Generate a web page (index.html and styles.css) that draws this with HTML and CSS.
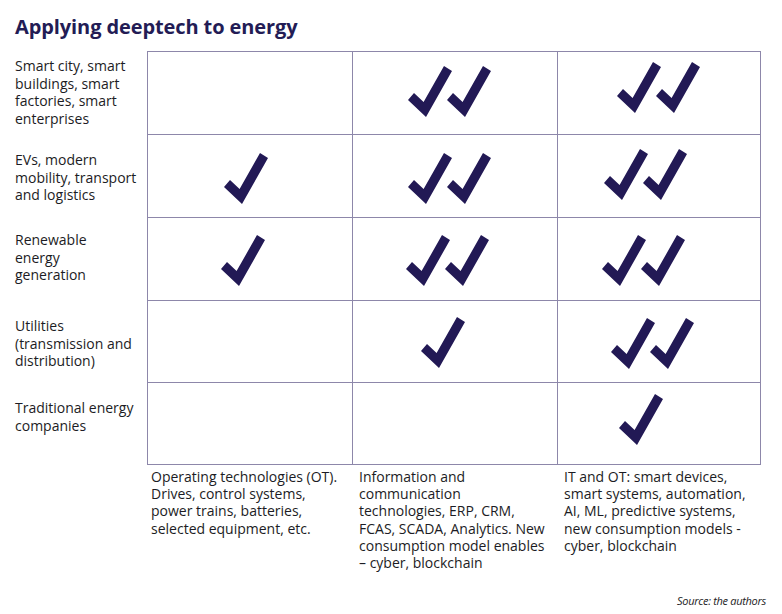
FILE: index.html
```html
<!DOCTYPE html>
<html lang="en">
<head>
<meta charset="utf-8">
<title>Applying deeptech to energy</title>
<link rel="stylesheet" href="styles.css">
</head>
<body>
<svg width="0" height="0" class="defs" aria-hidden="true">
  <defs>
    <symbol id="tick" viewBox="0 0 44 51">
      <polygon points="0,34 6,27 15.6,36.1 36,0 44,5 18,51"/>
    </symbol>
  </defs>
</svg>
<main class="page">
  <h1 class="title">Applying deeptech to energy</h1>
  <div class="matrix">
    <div class="label label-first">Smart city, smart<br>buildings, smart<br>factories, smart<br>enterprises</div>
    <div class="cell"></div>
    <div class="cell"><span class="checks r1c2"><svg class="tick"><use href="#tick"/></svg><svg class="tick"><use href="#tick"/></svg></span></div>
    <div class="cell cell-last"><span class="checks r1c3"><svg class="tick"><use href="#tick"/></svg><svg class="tick"><use href="#tick"/></svg></span></div>

    <div class="label">EVs, modern<br>mobility, transport<br>and logistics</div>
    <div class="cell"><span class="checks r2c1"><svg class="tick"><use href="#tick"/></svg></span></div>
    <div class="cell"><span class="checks r2c2"><svg class="tick"><use href="#tick"/></svg><svg class="tick"><use href="#tick"/></svg></span></div>
    <div class="cell cell-last"><span class="checks r2c3"><svg class="tick"><use href="#tick"/></svg><svg class="tick"><use href="#tick"/></svg></span></div>

    <div class="label label-renew">Renewable<br>energy<br>generation</div>
    <div class="cell"><span class="checks r3c1"><svg class="tick"><use href="#tick"/></svg></span></div>
    <div class="cell"><span class="checks r3c2"><svg class="tick"><use href="#tick"/></svg><svg class="tick"><use href="#tick"/></svg></span></div>
    <div class="cell cell-last"><span class="checks r3c3"><svg class="tick"><use href="#tick"/></svg><svg class="tick"><use href="#tick"/></svg></span></div>

    <div class="label">Utilities<br>(transmission and<br>distribution)</div>
    <div class="cell"></div>
    <div class="cell"><span class="checks r4c2"><svg class="tick"><use href="#tick"/></svg></span></div>
    <div class="cell cell-last"><span class="checks r4c3"><svg class="tick"><use href="#tick"/></svg><svg class="tick"><use href="#tick"/></svg></span></div>

    <div class="label">Traditional energy<br>companies</div>
    <div class="cell cell-bottom"></div>
    <div class="cell cell-bottom"></div>
    <div class="cell cell-bottom cell-last"><span class="checks r5c3"><svg class="tick"><use href="#tick"/></svg></span></div>

    <div class="spacer"></div>
    <div class="desc desc-first">Operating technologies (OT).<br>Drives, control systems,<br>power trains, batteries,<br>selected equipment, etc.</div>
    <div class="desc">Information and<br>communication<br>technologies, ERP, CRM,<br>FCAS, SCADA, Analytics. New<br>consumption model enables<br>– cyber, blockchain</div>
    <div class="desc">IT and OT: smart devices,<br>smart systems, automation,<br>AI, ML, predictive systems,<br>new consumption models -<br>cyber, blockchain</div>
  </div>
  <p class="source">Source: the authors</p>
</main>
</body>
</html>
```

FILE: styles.css
```css
* { box-sizing: border-box; }
html, body { margin: 0; padding: 0; background: #ffffff; }
body {
  font-family: "Open Sans", "Liberation Sans", sans-serif;
  color: #1c1c24;
  width: 782px;
  height: 614px;
  overflow: hidden;
  position: relative;
}
.defs { position: absolute; width: 0; height: 0; }
.page { padding: 13px 0 0 15px; }
.title {
  margin: 0 0 10px 0;
  font-size: 20px;
  line-height: 28px;
  font-weight: 700;
  color: #231c55;
  letter-spacing: -0.1px;
}
.matrix {
  display: grid;
  grid-template-columns: 132px 205px 205px 204px;
  grid-template-rows: 83px 83px 83px 82px 83px auto;
}
.label {
  font-size: 14px;
  line-height: 17.5px;
  padding: 17px 4px 0 0;
  white-space: nowrap;
}
.label-first { padding-top: 6px; }
.label-renew { padding-top: 14px; }
.cell {
  border-left: 1px solid #8d87aa;
  border-top: 1px solid #8d87aa;
  display: flex;
  align-items: center;
  justify-content: center;
}
.cell-last { border-right: 1px solid #8d87aa; }
.cell-bottom { border-bottom: 1px solid #8d87aa; }
.checks { display: flex; fill: #221955; }
.tick { width: 44px; height: 51px; display: block; }
.tick + .tick { margin-left: -5px; }

/* hand-placed offsets of each mark within its cell */
.r1c2 { transform: translate(-6px, -2px); }
.r1c3 { transform: translate(-1px, -6px); }
.r2c1 { transform: translate(-4px, 2px); }
.r2c2 { transform: translate(-6px, 2px); }
.r2c3 { transform: translate(-14px, -2px); }
.r3c1 { transform: translate(-7px, 1px); }
.r3c2 { transform: translate(-8px, 1px); }
.r3c3 { transform: translate(-16px, 1px); }
.r4c2 { transform: translate(-12px, 1px); }
.r4c3 { transform: translate(-7px, 2px); }
.r5c3 { transform: translate(-18px, -4px); }

.desc {
  font-size: 14px;
  line-height: 17.2px;
  padding: 3px 4px 0 7px;
  white-space: nowrap;
}
.desc-first { padding-left: 4px; }
.source {
  margin: 0;
  position: absolute;
  right: 16px;
  top: 593px;
  font-size: 11px;
  font-style: italic;
  line-height: 15px;
  letter-spacing: -0.3px;
}
```
